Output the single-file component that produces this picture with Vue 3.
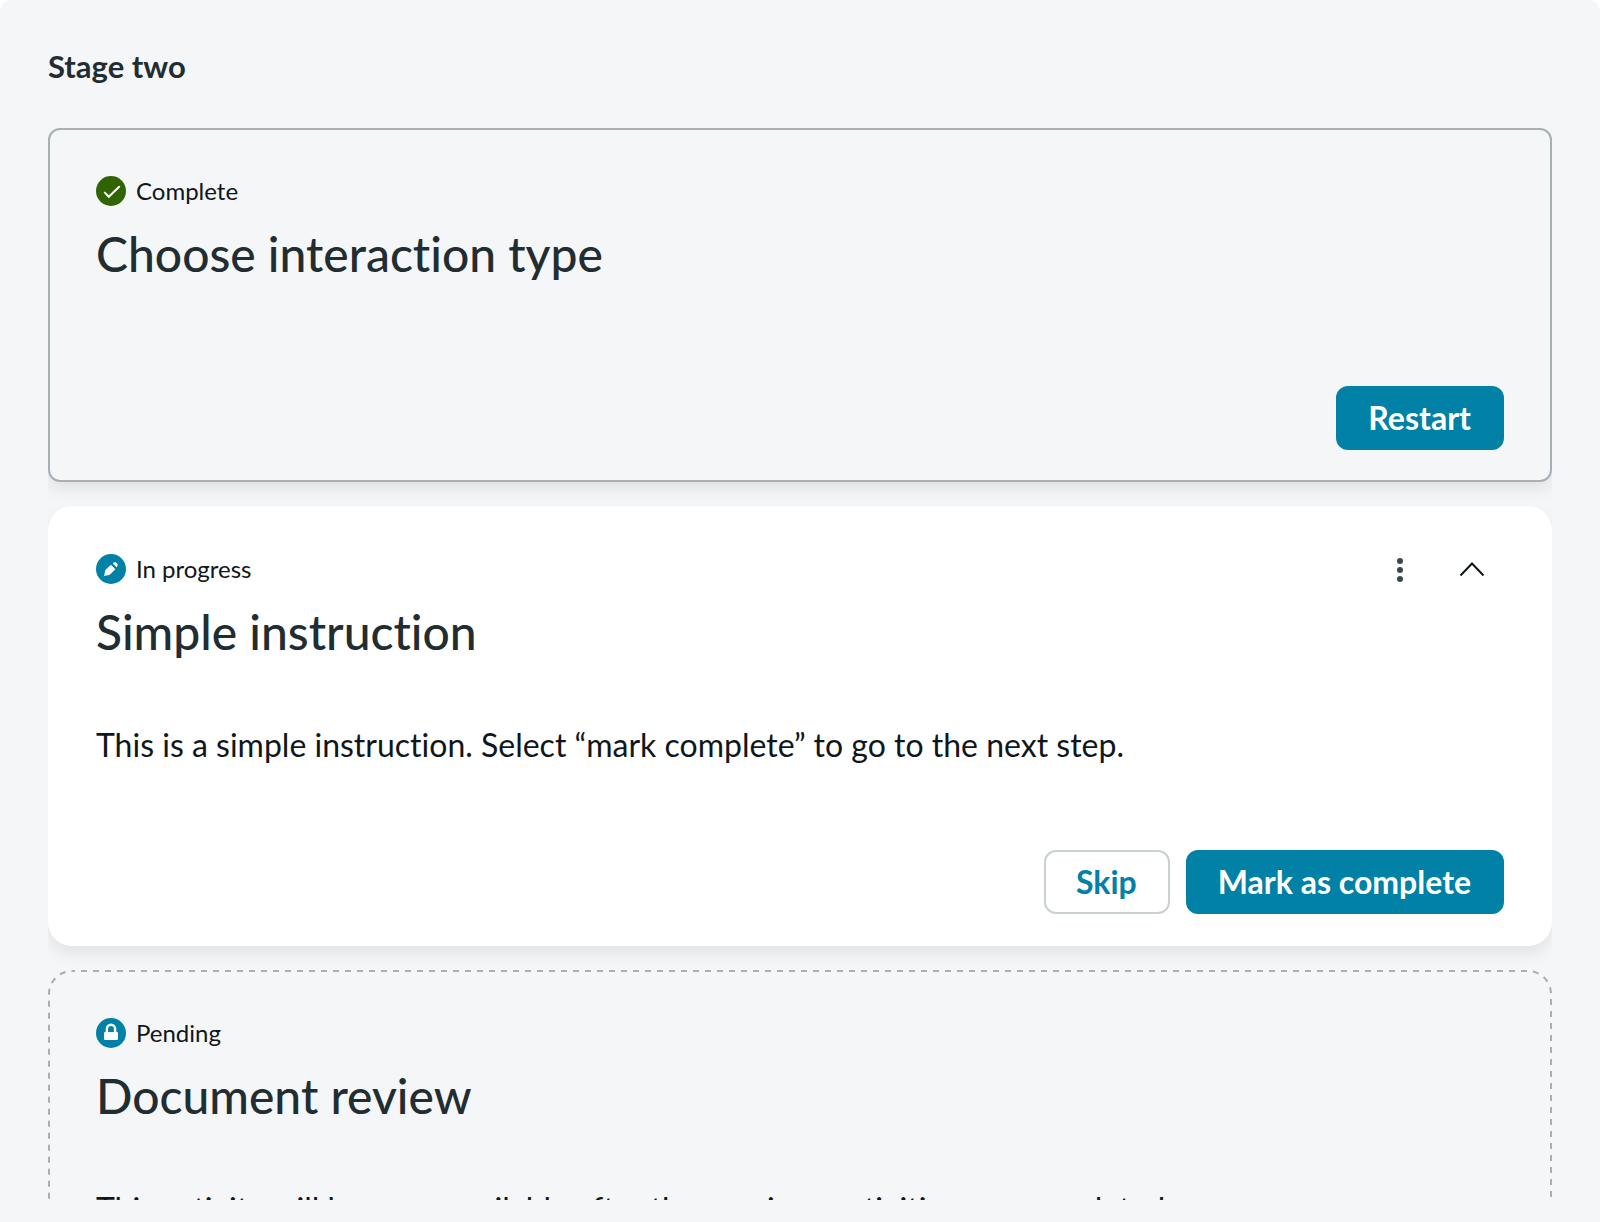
<script setup>
import { ref } from 'vue'

const activities = ref([
  { id: 'choose', status: 'complete', label: 'Complete', title: 'Choose interaction type', text: '' },
  {
    id: 'simple',
    status: 'progress',
    label: 'In progress',
    title: 'Simple instruction',
    text: 'This is a simple instruction. Select “mark complete” to go to the next step.',
  },
  {
    id: 'review',
    status: 'pending',
    label: 'Pending',
    title: 'Document review',
    text: 'This activity will become available after the previous activities are completed.',
  },
])
</script>

<template>
  <main class="stage">
    <h1 class="stage-name">Stage two</h1>
    <div class="activities">
      <article v-for="item in activities" :key="item.id" class="card" :class="item.status">
        <svg v-if="item.status === 'pending'" class="outline" aria-hidden="true">
          <rect x="1" y="1" rx="23" />
        </svg>
        <header class="card-head">
          <p class="status">
            <svg class="badge" viewBox="0 0 30 30" aria-hidden="true">
              <circle cx="15" cy="15" r="15" />
              <path v-if="item.status === 'complete'" class="tick" d="M8.8 16.6l4 4.2L23.2 10.8" />
              <g v-else-if="item.status === 'progress'" class="glyph">
                <path d="M8 22l1.200-5.300c.1-.6.4-1 .8-1.400L15 10.800l4.400 4.400L14.600 20c-.5.5-1 .8-1.600.9z" />
                <path d="M16.600 9.300c1.600-1.400 3.300-1.200 4.300-.2s1 2.700-.2 4.300z" />
              </g>
              <g v-else class="glyph">
                <rect x="8" y="14" width="14" height="8" rx="1.2" />
                <path class="shackle" d="M10.900 15v-4.200a4.100 4.100 0 0 1 8.200 0V15" />
              </g>
            </svg>
            {{ item.label }}
          </p>
          <div v-if="item.status === 'progress'" class="tools">
            <button type="button" class="icon-button" aria-label="More options">
              <svg viewBox="0 0 30 30" class="dots">
                <circle cx="15" cy="7" r="3" />
                <circle cx="15" cy="16" r="3" />
                <circle cx="15" cy="25" r="3" />
              </svg>
            </button>
            <button type="button" class="icon-button" aria-label="Collapse">
              <svg viewBox="0 0 30 30" class="chevron"><path d="M3.500 21.500L15 9.500l11.500 12" /></svg>
            </button>
          </div>
        </header>
        <h2 class="title">{{ item.title }}</h2>
        <p v-if="item.text" class="text">{{ item.text }}</p>
        <footer v-if="item.status !== 'pending'" class="actions">
          <button v-if="item.status === 'complete'" type="button" class="button primary">Restart</button>
          <template v-else>
            <button type="button" class="button">Skip</button>
            <button type="button" class="button primary">Mark as complete</button>
          </template>
        </footer>
      </article>
    </div>
  </main>
</template>

<style>
body {
  margin: 0;
  background: #fff;
}
</style>

<style scoped>
.stage {
  box-sizing: border-box;
  display: flex;
  flex-direction: column;
  height: 100vh;
  padding: 48px 48px 22px;
  border-radius: 12px 12px 0 0;
  background: #f4f6f8;
  color: #0f171a;
  font-family: Lato, "Liberation Sans", sans-serif;
  font-variant-ligatures: none;
}

.stage-name {
  margin: 0 0 44px;
  color: #222d32;
  font-size: 31px;
  font-weight: 700;
  line-height: 36px;
}

.activities {
  display: flex;
  flex: 1;
  flex-direction: column;
  gap: 24px;
  min-height: 0;
  overflow-y: auto;
  scrollbar-width: none;
}

.card {
  position: relative;
  box-sizing: border-box;
  flex: none;
  padding: 48px 48px 32px;
  border-radius: 24px;
  background: #f4f6f8;
}

.complete {
  padding: 46px 46px 30px;
  border: 2px solid #a7b0b5;
  border-radius: 12px;
}

.complete,
.progress {
  box-shadow: 0 8px 16px rgba(0, 0, 0, 0.08);
}

.progress {
  background: #fff;
}

.outline {
  position: absolute;
  inset: 0;
  width: 100%;
  height: 100%;
  pointer-events: none;
}

.outline rect {
  width: calc(100% - 2px);
  height: calc(100% - 2px);
  fill: none;
  stroke: #a7b0b5;
  stroke-width: 2;
  stroke-dasharray: 6 6;
  stroke-dashoffset: 3;
}

.card-head {
  display: flex;
  align-items: center;
  justify-content: space-between;
  height: 30px;
}

.status {
  display: flex;
  align-items: center;
  gap: 10px;
  margin: 0;
  font-size: 24px;
  line-height: 30px;
}

.badge {
  width: 30px;
  height: 30px;
  fill: #0081a5;
}

.complete .badge {
  fill: #2f6400;
}

.tick {
  fill: none;
  stroke: #fff;
  stroke-width: 2;
  stroke-linecap: round;
}

.glyph {
  fill: #fff;
}

.shackle {
  fill: none;
  stroke: #fff;
  stroke-width: 2.4;
}

.tools {
  display: flex;
  gap: 42px;
  padding-right: 17px;
}

.icon-button {
  display: flex;
  padding: 0;
  border: 0;
  background: none;
}

.icon-button svg {
  width: 30px;
  height: 30px;
}

.dots {
  fill: #3a474d;
}

.chevron {
  fill: none;
  stroke: #0f171a;
  stroke-width: 2;
}

.title {
  margin: 18px 0 0;
  color: #222d32;
  font-family: "Lato Medium", Lato, "Liberation Sans", sans-serif;
  font-size: 48px;
  font-weight: 500;
  line-height: 60px;
}

.text {
  margin: 59px 0 0;
  font-size: 32px;
  line-height: 48px;
}

.actions {
  display: flex;
  justify-content: flex-end;
  gap: 16px;
  margin-top: 81px;
}

.complete .actions {
  margin-top: 102px;
}

.button {
  height: 64px;
  padding: 0 31px 0 30px;
  border: 2px solid #c9d1d5;
  border-radius: 12px;
  background: #fff;
  color: #0081a5;
  font: 700 32px/40px Lato, "Liberation Sans", sans-serif;
}

.primary {
  border-color: #0081a5;
  background: #0081a5;
  color: #fff;
}
</style>
